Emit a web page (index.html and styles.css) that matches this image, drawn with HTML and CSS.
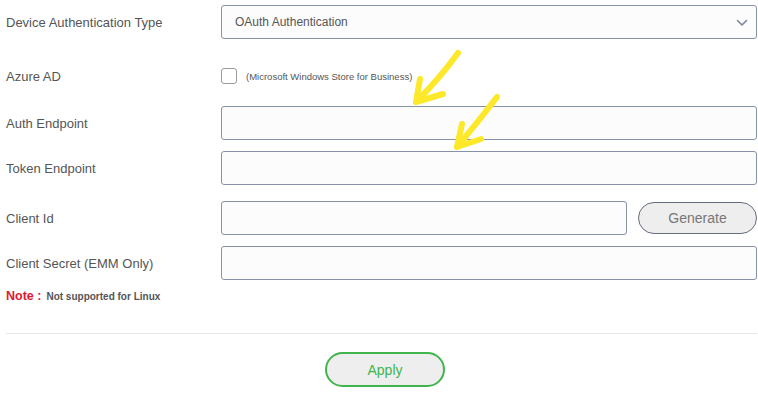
FILE: index.html
```html
<!DOCTYPE html>
<html lang="en">
  <head>
    <meta charset="UTF-8" />
    <title>OAuth Settings</title>
    <link rel="stylesheet" href="styles.css">
  </head>
  <body>
    <main class="settings">
      <div class="row row-first">
        <label class="row-label">Device Authentication Type</label>
        <div class="select-wrap">
          <select class="field select">
            <option>OAuth Authentication</option>
          </select>
          <svg class="chevron" width="12" height="8" viewBox="0 0 12 8">
            <path d="M1.5 1.5 L6 6 L10.5 1.5" fill="none" stroke="#7b869a" stroke-width="1.6" stroke-linecap="round" stroke-linejoin="round"/>
          </svg>
        </div>
      </div>

      <div class="row row-check">
        <label class="row-label">Azure AD</label>
        <div class="check-wrap">
          <input type="checkbox" class="check" />
          <span class="check-text">(Microsoft Windows Store for Business)</span>
        </div>
      </div>

      <div class="row row-auth">
        <label class="row-label">Auth Endpoint</label>
        <input type="text" class="field" />
      </div>

      <div class="row row-token">
        <label class="row-label">Token Endpoint</label>
        <input type="text" class="field" />
      </div>

      <div class="row row-client">
        <label class="row-label">Client Id</label>
        <div class="client-wrap">
          <input type="text" class="field" />
          <button class="btn-generate" type="button">Generate</button>
        </div>
      </div>

      <div class="row row-secret">
        <label class="row-label">Client Secret (EMM Only)</label>
        <input type="text" class="field" />
      </div>

      <p class="note"><span class="note-tag">Note :</span> <span class="note-text">Not supported for Linux</span></p>

      <hr class="divider" />

      <div class="actions">
        <button class="btn-apply" type="button">Apply</button>
      </div>
    </main>

    <!-- annotation arrows -->
    <svg class="marks" width="758" height="400" viewBox="0 0 758 400">
      <g fill="none" stroke="#fde829" stroke-width="6" stroke-linecap="round" stroke-linejoin="round">
        <path d="M458 53 Q440 78 416 102"/>
        <path d="M420 79 L416 102 L443 94"/>
        <path d="M497 97 Q478 122 457 147"/>
        <path d="M462 124 L457 147 L481 139"/>
      </g>
    </svg>
  </body>
</html>
```

FILE: styles.css
```css
/* OAuth settings form */

* {
  margin: 0;
  padding: 0;
  box-sizing: border-box;
}

body {
  font-family: "Liberation Sans", Arial, sans-serif;
  color: #555;
  background: #fff;
  width: 758px;
  height: 400px;
  overflow: hidden;
  position: relative;
}

.settings {
  padding: 0 1px 0 6px;
}

/* Rows */
.row {
  display: flex;
  align-items: center;
  height: 34px;
}

.row-first { margin-top: 5px; }
.row-check { margin-top: 20px; }
.row-auth { margin-top: 13px; }
.row-token { margin-top: 11px; }
.row-client { margin-top: 16px; }
.row-secret { margin-top: 11px; }

.row-label {
  width: 215px;
  flex: none;
  font-size: 13px;
  color: #555;
}

/* Fields */
.field {
  flex: 1;
  height: 34px;
  border: 1px solid #8692a8;
  border-radius: 3px;
  background: #fcfcfc;
  font-family: inherit;
  font-size: 12px;
  color: #555;
  outline: none;
}

.select-wrap {
  flex: 1;
  display: flex;
  position: relative;
  height: 34px;
}

.select {
  appearance: none;
  -webkit-appearance: none;
  padding-left: 13px;
}

.chevron {
  position: absolute;
  right: 9px;
  top: 14px;
}

/* Checkbox */
.check-wrap {
  display: flex;
  align-items: center;
  gap: 9px;
}

.check {
  appearance: none;
  -webkit-appearance: none;
  width: 16px;
  height: 16px;
  border: 1.5px solid #9a9a9a;
  border-radius: 3px;
  background: #fff;
}

.check-text {
  font-size: 9.5px;
  color: #555;
}

/* Client id + generate */
.client-wrap {
  flex: 1;
  display: flex;
  align-items: center;
  gap: 11px;
}

.btn-generate {
  width: 119px;
  height: 32px;
  flex: none;
  border: 1px solid #646d7e;
  border-radius: 16px;
  background: #eee;
  font-family: inherit;
  font-size: 14px;
  color: #777;
}

/* Note */
.note {
  margin-top: 9px;
  height: 14px;
  display: flex;
  align-items: center;
  gap: 5px;
}

.note-tag {
  font-size: 12.5px;
  font-weight: bold;
  color: #e3182f;
}

.note-text {
  font-size: 10px;
  font-weight: bold;
  color: #555;
}

.divider {
  border: none;
  border-top: 1px solid #e6e6e6;
  margin-top: 30px;
}

/* Apply */
.actions {
  display: flex;
  justify-content: center;
  padding-left: 7px;
  margin-top: 18px;
}

.btn-apply {
  width: 120px;
  height: 35px;
  border: 2px solid #40b54c;
  border-radius: 18px;
  background: #eee;
  font-family: inherit;
  font-size: 14px;
  color: #40b54c;
}

/* Annotation overlay */
.marks {
  position: absolute;
  left: 0;
  top: 0;
  pointer-events: none;
}
```
